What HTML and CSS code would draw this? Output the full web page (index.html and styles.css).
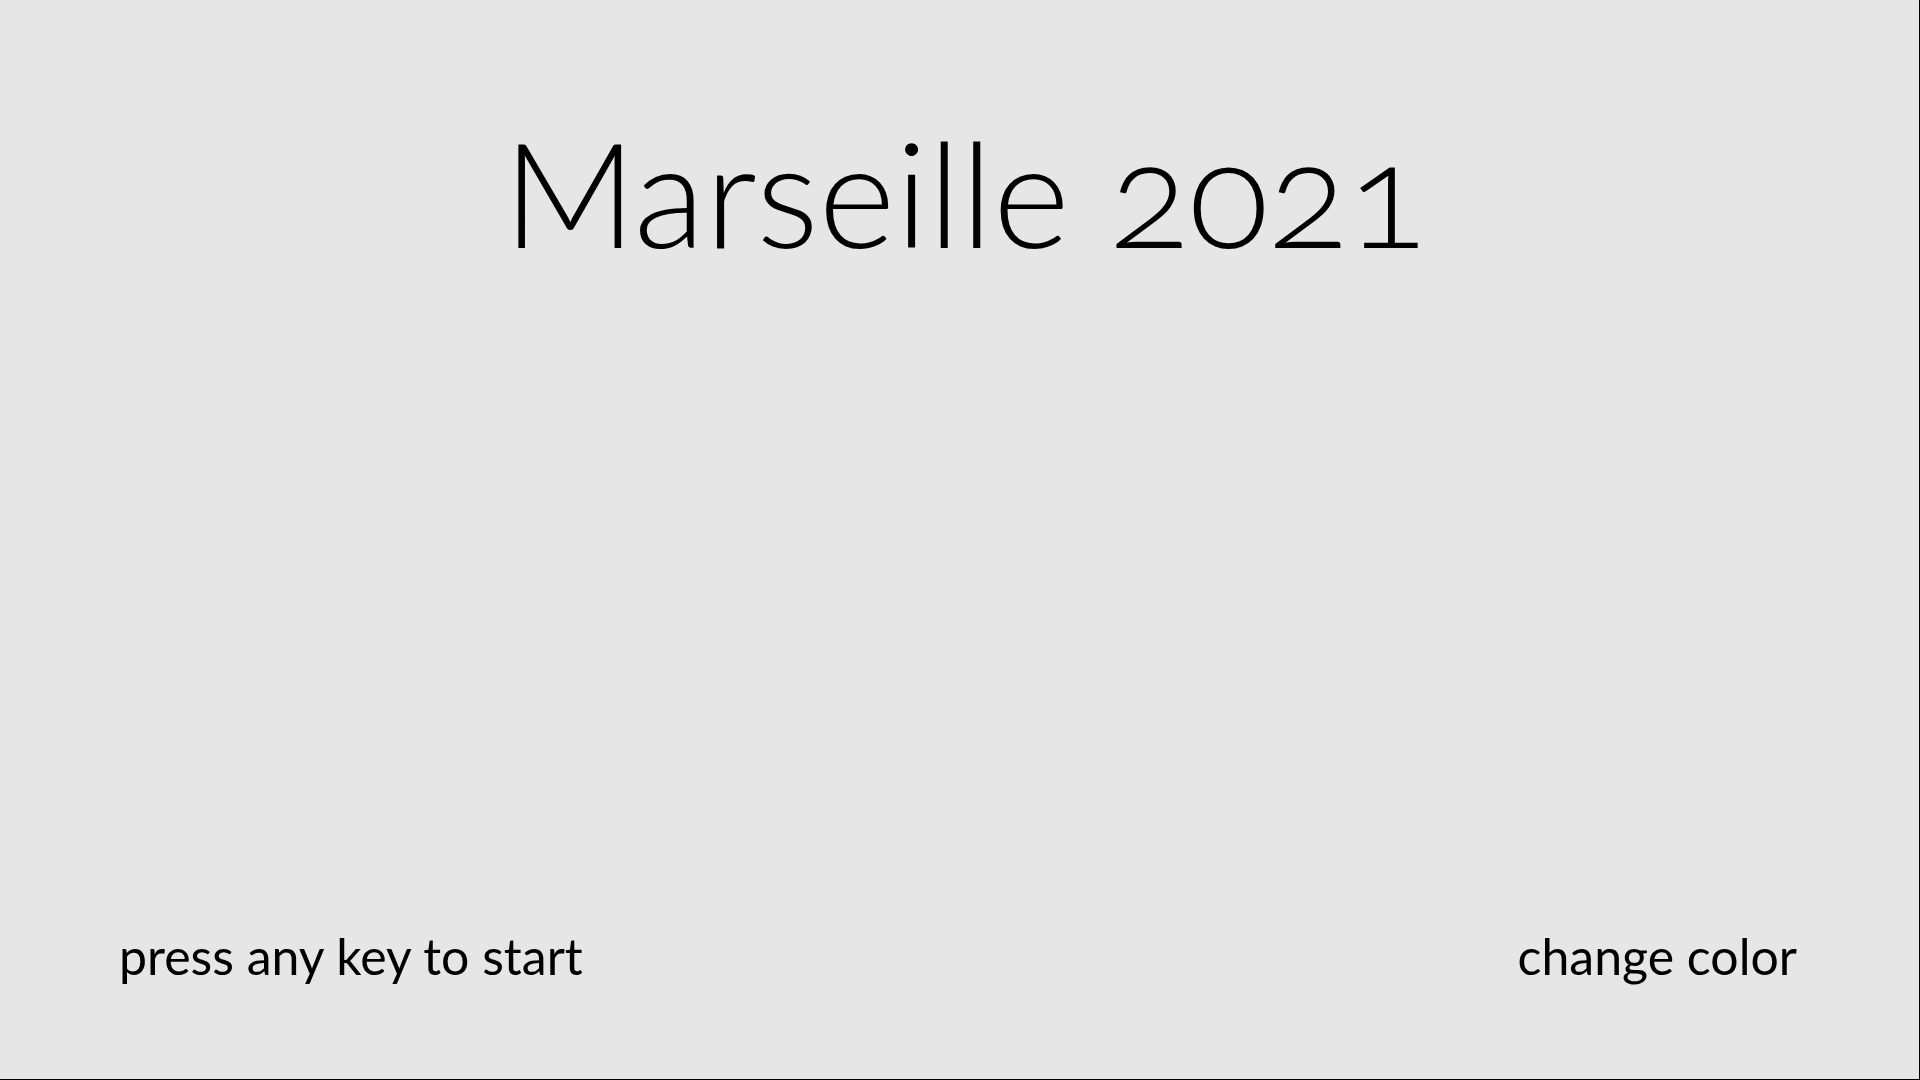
FILE: index.html
```html
<!DOCTYPE html>
<html lang="en">
<head>
<meta charset="utf-8">
<title>Marseille 2021</title>
<link rel="stylesheet" href="styles.css">
</head>
<body>
<main class="screen">
  <h1 class="title">Marseille <span class="year">2021</span></h1>
  <footer class="footer">
    <span class="hint">press any key to start</span>
    <span class="hint">change color</span>
  </footer>
</main>
</body>
</html>
```
FILE: styles.css
```css
html, body {
  margin: 0;
  padding: 0;
}
body {
  background: #e6e6e6;
  color: #000;
  font-family: Lato, "Open Sans", sans-serif;
}
.screen {
  box-sizing: border-box;
  width: 100vw;
  height: 100vh;
  border-right: 1px solid #000;
  border-bottom: 1px solid #000;
  display: flex;
  flex-direction: column;
  justify-content: space-between;
  padding: 0 122px 0 119px;
}
.title {
  margin: 0;
  padding-top: 118px;
  padding-left: 14px;
  text-align: center;
  font-weight: 300;
  font-size: 147px;
  line-height: 1;
}
.year {
  font-variant-numeric: oldstyle-nums;
}
.footer {
  display: flex;
  justify-content: space-between;
  align-items: baseline;
  padding-bottom: 98px;
}
.hint {
  font-size: 50px;
  line-height: 1;
}
```
